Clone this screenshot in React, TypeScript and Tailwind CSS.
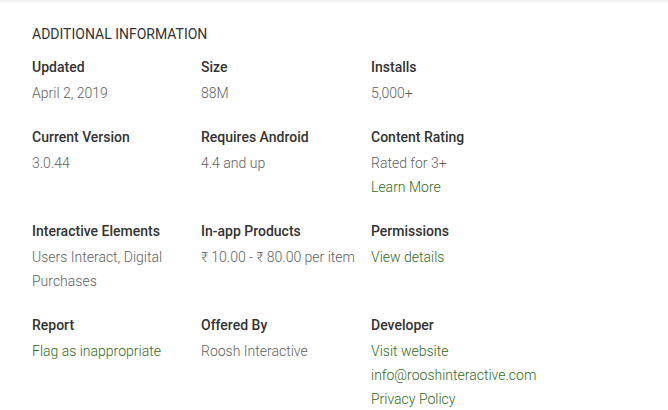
import React from "react";

type Item = { label: string; values: { text: string; link?: boolean }[] };

const items: Item[] = [
  { label: "Updated", values: [{ text: "April 2, 2019" }] },
  { label: "Size", values: [{ text: "88M" }] },
  { label: "Installs", values: [{ text: "5,000+" }] },
  { label: "Current Version", values: [{ text: "3.0.44" }] },
  { label: "Requires Android", values: [{ text: "4.4 and up" }] },
  {
    label: "Content Rating",
    values: [{ text: "Rated for 3+" }, { text: "Learn More", link: true }],
  },
  { label: "Interactive Elements", values: [{ text: "Users Interact, Digital Purchases" }] },
  { label: "In-app Products", values: [{ text: "₹ 10.00 - ₹ 80.00 per item" }] },
  { label: "Permissions", values: [{ text: "View details", link: true }] },
  { label: "Report", values: [{ text: "Flag as inappropriate", link: true }] },
  { label: "Offered By", values: [{ text: "Roosh Interactive" }] },
  {
    label: "Developer",
    values: [
      { text: "Visit website", link: true },
      { text: "info@rooshinteractive.com", link: true },
      { text: "Privacy Policy", link: true },
    ],
  },
];

export default function App() {
  return (
    <div
      className="w-[668px] h-[410px] bg-white overflow-hidden relative"
      style={{ fontFamily: "Roboto, 'Liberation Sans', sans-serif" }}
    >
      <div className="h-[4px] bg-gradient-to-b from-[#ededed] to-white" />
      <div className="pl-[32px] pt-[18px]">
        <div className="text-[14px] leading-[24px] text-[#333]">
          ADDITIONAL INFORMATION
        </div>
        <div className="mt-[8px] grid grid-cols-[169px_170px_170px] gap-y-[19px]">
          {items.map((it) => (
            <div key={it.label}>
              <div className="text-[14px] leading-[26px] font-medium text-[#333]">{it.label}</div>
              <div className="mt-[1px]">
                {it.values.map((v) => (
                  <div
                    key={v.text}
                    className={
                      "text-[14px] leading-[24px] font-light pr-[4px] " +
                      (v.link ? "text-[#33691e]" : "text-[#616161]")
                    }
                  >
                    {v.text}
                  </div>
                ))}
              </div>
            </div>
          ))}
        </div>
      </div>
    </div>
  );
}
